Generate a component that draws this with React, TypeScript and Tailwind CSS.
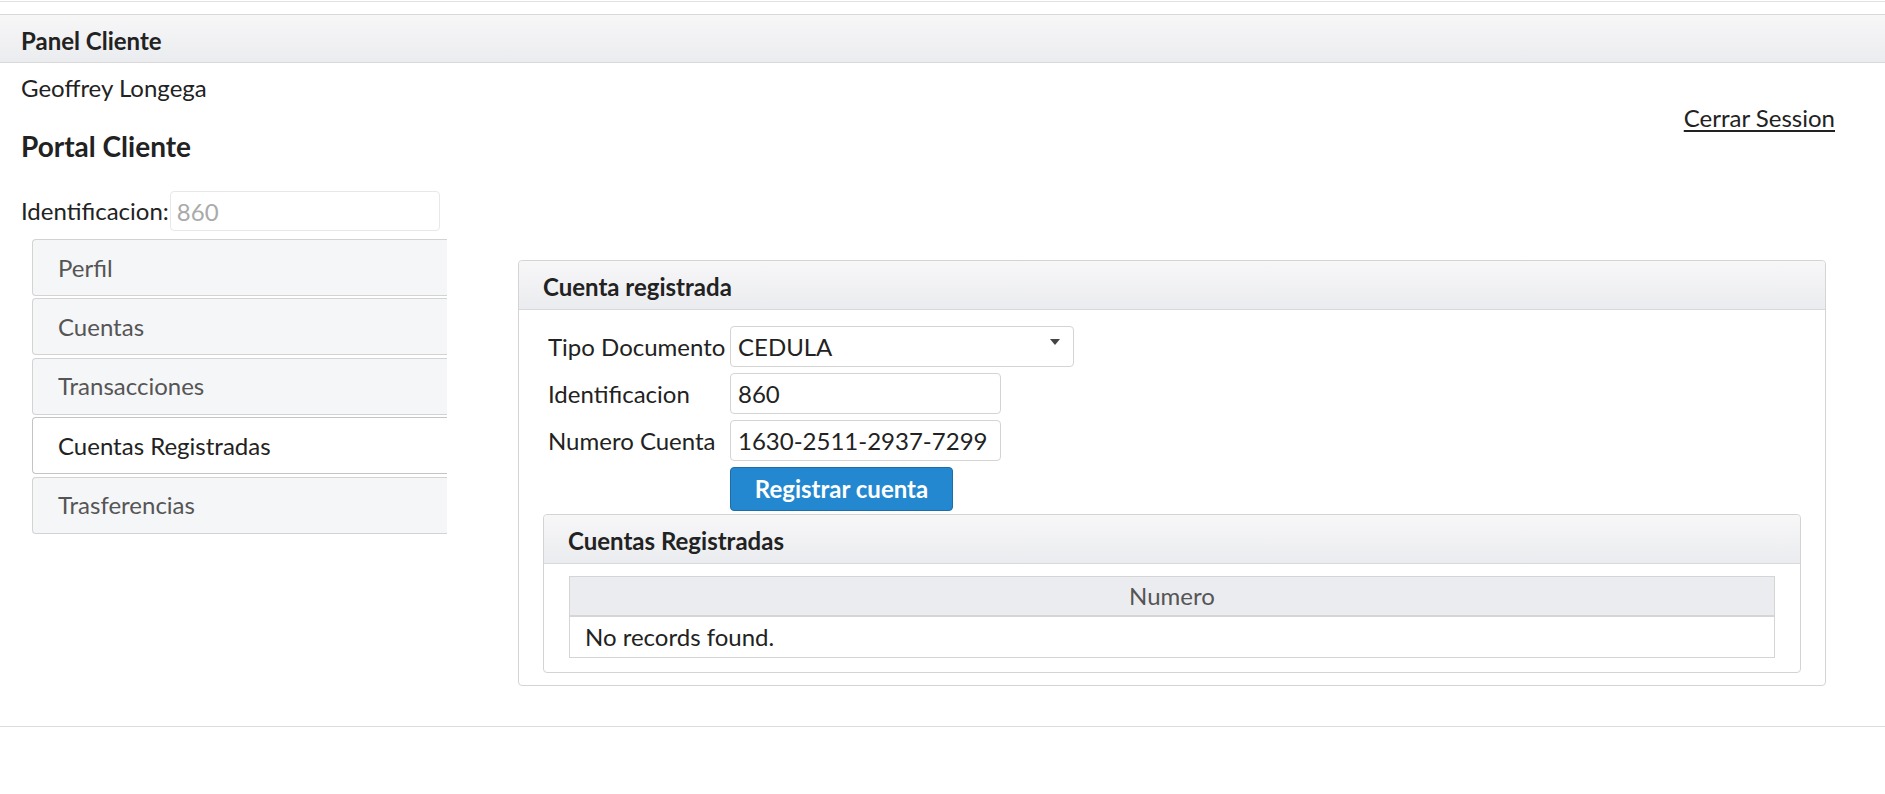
export default function App() {
  const tabs = ["Perfil", "Cuentas", "Transacciones", "Cuentas Registradas", "Trasferencias"];
  const active = 3;
  return (
    <div className="min-h-[794px] bg-white font-['Lato',sans-serif] text-[24px] text-[#222]">
      <div className="mt-[1px] h-[1px] bg-[#e2e2e2]" />
      <div className="mt-[12px] h-[49px] border-y border-[#d9d9d9] bg-linear-to-b from-[#f7f7f8] to-[#ebecef] px-[21px] pt-[4px] font-bold leading-[43px]">
        Panel Cliente
      </div>
      <div className="px-[21px]">
        <div className="mt-[10px] leading-[30px]">Geoffrey Longega</div>
        <div className="flex items-start justify-between pr-[29px]">
          <h3 className="mt-[26px] text-[28px] font-bold leading-[34px]">Portal Cliente</h3>
          <a href="#" className="leading-[30px] underline underline-offset-[3px]">
            Cerrar Session
          </a>
        </div>
        <div className="mt-[28px] flex h-[40px] items-center">
          <span className="leading-[30px]">Identificacion:</span>
          <input
            readOnly
            placeholder="860"
            className="ml-[1px] h-[40px] w-[270px] rounded-[4px] border border-[#e8e8e8] pl-[6px] leading-[38px] outline-none placeholder:text-[#aaaaaa]"
          />
        </div>
        <div className="mt-[8px] flex items-start">
          <div className="ml-[11px] flex w-[415px] flex-col gap-[2.4px]">
            {tabs.map((t, i) => (
              <div
                key={t}
                className={
                  i === active
                    ? "flex h-[57px] items-center rounded-l-[4px] border border-r-0 border-[#c4c4c4] bg-white pl-[25px] text-[#222]"
                    : "flex h-[57px] items-center rounded-l-[4px] border border-r-0 border-[#d3d3d3] bg-[#f5f6f8] pl-[25px] text-[#555]"
                }
              >
                {t}
              </div>
            ))}
          </div>
          <div className="ml-[71px] mt-[21px] w-[1308px] rounded-[4px] border border-[#d4d4d4]">
            <div className="h-[49px] rounded-t-[4px] border-b border-[#d9d9d9] bg-linear-to-b from-[#f7f7f8] to-[#ebecef] pl-[24px] pt-[3px] font-bold leading-[45px]">
              Cuenta registrada
            </div>
            <div className="grid grid-cols-[182px_1fr] items-center gap-y-[6px] pl-[29px] pt-[16px]">
              <span className="leading-[30px]">Tipo Documento</span>
              <div className="relative h-[41px] w-[344px] rounded-[4px] border border-[#d4d4d4] pl-[7px] leading-[39px]">
                CEDULA
                <svg className="absolute right-[13px] top-[12px]" width="10" height="6" viewBox="0 0 10 6">
                  <path d="M0 0 H10 L5 6 Z" fill="#444444" />
                </svg>
              </div>
              <span className="leading-[30px]">Identificacion</span>
              <input
                readOnly
                value="860"
                className="h-[41px] w-[271px] rounded-[4px] border border-[#d4d4d4] pl-[7px] leading-[39px] outline-none"
              />
              <span className="leading-[30px]">Numero Cuenta</span>
              <input
                readOnly
                value="1630-2511-2937-7299"
                className="h-[41px] w-[271px] rounded-[4px] border border-[#d4d4d4] pl-[7px] leading-[39px] outline-none"
              />
              <span />
              <button className="h-[44px] w-[223px] rounded-[4px] border border-[#1c6ea9] bg-[#2388d0] font-bold leading-[42px] text-white">
                Registrar cuenta
              </button>
            </div>
            <div className="mx-[24px] mb-[12px] mt-[3px] rounded-[4px] border border-[#d4d4d4]">
              <div className="h-[49px] rounded-t-[4px] border-b border-[#d9d9d9] bg-linear-to-b from-[#f7f7f8] to-[#ebecef] pl-[24px] pt-[4px] font-bold leading-[44px]">
                Cuentas Registradas
              </div>
              <div className="px-[25px] pb-[14px] pt-[12px]">
                <div className="h-[41px] border-x border-b-2 border-t border-[#d5d5d5] bg-[#ebecef] text-center leading-[38px] text-[#555]">
                  Numero
                </div>
                <div className="h-[41px] border-x border-b border-[#d5d5d5] pl-[15px] leading-[40px]">
                  No records found.
                </div>
              </div>
            </div>
          </div>
        </div>
      </div>
      <div className="mt-[40px] h-[1px] bg-[#dcdcdc]" />
    </div>
  );
}
